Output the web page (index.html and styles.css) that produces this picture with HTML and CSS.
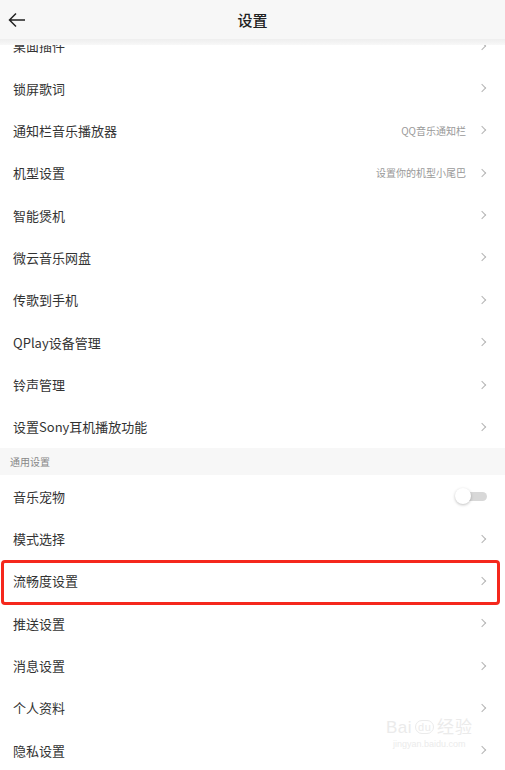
FILE: index.html
```html
<!DOCTYPE html>
<html lang="zh-CN">
<head>
    <meta charset="UTF-8">
    <meta name="viewport" content="width=device-width, initial-scale=1.0">
    <title>设置</title>
    <link rel="stylesheet" href="styles.css">
</head>
<body>

<header class="topbar">
    <svg class="back" width="18" height="16" viewBox="0 0 18 16">
        <path d="M17 8 H2 M8 1.5 L1.5 8 L8 14.5" fill="none" stroke="#222" stroke-width="1.5"/>
    </svg>
    <h1>设置</h1>
</header>

<main class="list">
    <div class="row"><span>桌面插件</span><i class="chev"></i></div>
    <div class="row"><span>锁屏歌词</span><i class="chev"></i></div>
    <div class="row"><span>通知栏音乐播放器</span><em class="extra">QQ音乐通知栏</em><i class="chev"></i></div>
    <div class="row"><span>机型设置</span><em class="extra">设置你的机型小尾巴</em><i class="chev"></i></div>
    <div class="row"><span>智能煲机</span><i class="chev"></i></div>
    <div class="row"><span>微云音乐网盘</span><i class="chev"></i></div>
    <div class="row"><span>传歌到手机</span><i class="chev"></i></div>
    <div class="row"><span>QPlay设备管理</span><i class="chev"></i></div>
    <div class="row"><span>铃声管理</span><i class="chev"></i></div>
    <div class="row"><span>设置Sony耳机播放功能</span><i class="chev"></i></div>

    <div class="section">通用设置</div>

    <div class="row"><span>音乐宠物</span><b class="toggle"></b></div>
    <div class="row"><span>模式选择</span><i class="chev"></i></div>
    <div class="row highlight"><span>流畅度设置</span><i class="chev"></i></div>
    <div class="row"><span>推送设置</span><i class="chev"></i></div>
    <div class="row"><span>消息设置</span><i class="chev"></i></div>
    <div class="row"><span>个人资料</span><i class="chev"></i></div>
    <div class="row"><span>隐私设置</span><i class="chev"></i></div>
</main>

<div class="watermark">
    <div class="wm-logo">Bai<span class="wm-du">du</span>经验</div>
    <div class="wm-url">jingyan.baidu.com</div>
</div>

</body>
</html>
```

FILE: styles.css
```css
html, body {
    margin: 0;
    padding: 0;
}
body {
    font-family: "Noto Sans CJK SC", "Noto Sans", sans-serif;
    background: #fff;
    color: #333;
    height: 770px;
    overflow: hidden;
}
/* header sits over the scrolled list; its soft bottom band hides the first row's top */
.topbar {
    position: fixed;
    top: 0;
    left: 0;
    right: 0;
    height: 45px;
    box-sizing: border-box;
    padding-bottom: 6px;
    background: linear-gradient(#f7f7f7 39px, #eeeeee 39px, #f8f8f8 45px);
    display: flex;
    align-items: center;
    justify-content: center;
    z-index: 2;
}
.topbar h1 {
    margin: 0;
    font-size: 15px;
    font-weight: 500;
    color: #222;
}
.back {
    position: absolute;
    left: 8px;
    top: 12px;
}
.list {
    padding-top: 24.6px;
}
.row {
    height: 42.35px;
    display: flex;
    align-items: center;
    padding: 0 18px 0 13px;
    font-size: 13px;
    color: #333;
    position: relative;
}
.row span {
    flex: 1;
}
.extra {
    font-style: normal;
    font-size: 10px;
    color: #999;
    margin-right: 13px;
}
.chev {
    width: 5px;
    height: 5px;
    border-top: 1px solid #b5b5b5;
    border-right: 1px solid #b5b5b5;
    transform: rotate(45deg);
    margin-right: 2px;
}
.section {
    height: 27px;
    display: flex;
    align-items: center;
    padding-left: 10px;
    background: #f7f7f7;
    font-size: 10px;
    color: #888;
}
.toggle {
    width: 26px;
    height: 9px;
    border-radius: 5px;
    background: #d8d8d8;
    position: relative;
}
.toggle::before {
    content: "";
    position: absolute;
    left: -6px;
    top: -4px;
    width: 16px;
    height: 16px;
    border-radius: 50%;
    background: #fff;
    box-shadow: 0 1px 3px rgba(0, 0, 0, 0.25);
}
.highlight::after {
    content: "";
    position: absolute;
    top: 0;
    left: 1px;
    right: 5px;
    bottom: -3px;
    border: 3px solid #f5281c;
    border-radius: 4px;
}
.watermark {
    position: absolute;
    left: 386px;
    top: 713px;
    color: #ebebeb;
    font-family: "Liberation Sans", Arial, sans-serif;
    text-align: center;
}
.wm-logo {
    font-size: 17px;
    letter-spacing: 0.5px;
}
.wm-du {
    display: inline-block;
    border: 1px solid #ebebeb;
    border-radius: 8px;
    font-size: 11px;
    padding: 0 2px;
    margin: 0 3px;
    vertical-align: 2px;
}
.wm-url {
    font-size: 9px;
    margin-top: 1px;
}
```
